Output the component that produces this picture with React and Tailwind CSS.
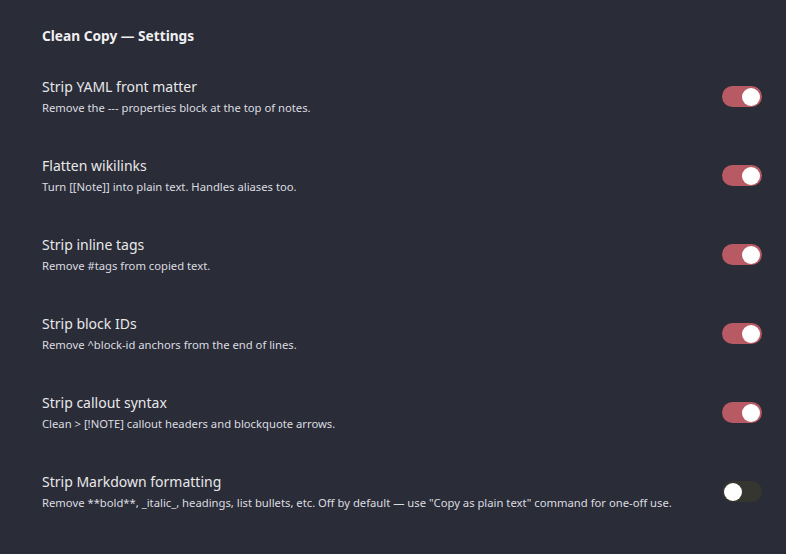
import React, { useState } from 'react';

const initial = [
  { id: 'yaml', name: 'Strip YAML front matter', desc: 'Remove the --- properties block at the top of notes.', on: true },
  { id: 'wiki', name: 'Flatten wikilinks', desc: 'Turn [[Note]] into plain text. Handles aliases too.', on: true },
  { id: 'tags', name: 'Strip inline tags', desc: 'Remove #tags from copied text.', on: true },
  { id: 'ids', name: 'Strip block IDs', desc: 'Remove ^block-id anchors from the end of lines.', on: true },
  { id: 'callout', name: 'Strip callout syntax', desc: 'Clean > [!NOTE] callout headers and blockquote arrows.', on: true },
  {
    id: 'md',
    name: 'Strip Markdown formatting',
    desc: 'Remove **bold**, _italic_, headings, list bullets, etc. Off by default — use "Copy as plain text" command for one-off use.',
    on: false,
  },
];

const Toggle = ({ on, onClick }) => (
  <button
    onClick={onClick}
    className={`relative w-[40px] h-[21px] rounded-full shrink-0 transition-colors ${on ? 'bg-[#b85a64]' : 'bg-[#34362f]'}`}
  >
    <span
      className={`absolute top-[1.5px] w-[18px] h-[18px] rounded-full bg-white transition-all ${on ? 'left-[20px]' : 'left-[2px]'}`}
    />
  </button>
);

export default function App() {
  const [settings, setSettings] = useState(initial);

  const flip = (id) => setSettings((s) => s.map((x) => (x.id === id ? { ...x, on: !x.on } : x)));

  return (
    <div className="w-[786px] h-[554px] bg-[#2a2c37] text-[#e6e6e8] overflow-hidden font-['Noto_Sans','Open_Sans',sans-serif]">
      <div className="pl-[42px] pt-[26px] h-[57px]">
        <h1 className="text-[13.7px] leading-[20px] font-bold text-[#f0f0f2]">Clean Copy — Settings</h1>
      </div>
      {settings.map((s) => (
        <div key={s.id} className="h-[79px] flex items-center justify-between pl-[42px] pr-[24px]">
          <div className="flex flex-col">
            <span className="text-[14px] leading-[21px] text-[#e8e8ea]">{s.name}</span>
            <span className="text-[11.25px] leading-[21px] text-[#dcdce0]">{s.desc}</span>
          </div>
          <Toggle on={s.on} onClick={() => flip(s.id)} />
        </div>
      ))}
    </div>
  );
}
